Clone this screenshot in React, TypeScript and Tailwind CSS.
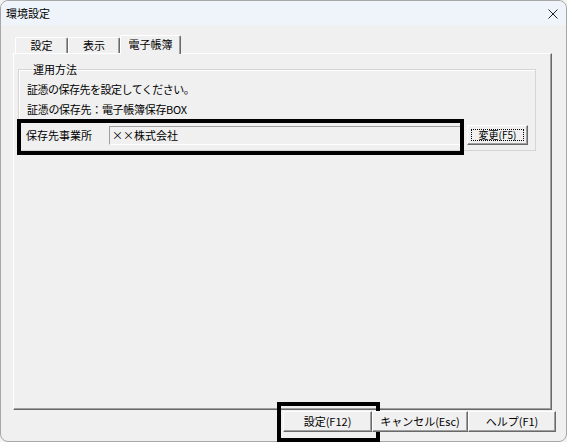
import React from "react";

const font = 'font-["Noto_Sans_CJK_JP","Noto_Sans_CJK_SC",sans-serif]';

const Tab = ({ label, active, w }: { label: string; active?: boolean; w: string }) => (
  <div
    className={
      "flex items-center justify-center border-l border-t border-white border-r border-r-[#696969] rounded-t-[2px] shadow-[inset_-1px_0_0_#a0a0a0] text-[11px] leading-none " +
      w +
      (active ? " h-[19px] bg-[#f0f0f0] relative z-10 -mb-px pb-[2px]" : " h-[16px] mt-auto")
    }
  >
    {label}
  </div>
);

const Btn = ({ label, w, h, focus, small }: { label: string; w: string; h: string; focus?: boolean; small?: boolean }) => (
  <div
    className={
      "relative flex items-center justify-center bg-[#f0f0f0] border border-t-white border-l-white border-r-[#696969] border-b-[#696969] shadow-[inset_-1px_-1px_0_#a0a0a0] leading-none " +
      w +
      " " +
      h +
      (small ? " text-[10px]" : " text-[11px]")
    }
  >
    {focus && <div className="absolute inset-[3px] border border-dotted border-black" />}
    <span className="relative">{label}</span>
  </div>
);

export default function App() {
  return (
    <div className={"w-[567px] h-[442px] bg-[#f3f3f3] text-black " + font}>
      <div className="h-full flex flex-col border border-[#a7a7a7] rounded-lg bg-[#f0f0f0]">
        {/* title bar */}
        <div className="h-[24px] shrink-0 bg-[#eef4fa] rounded-t-lg flex items-center justify-between pl-[5px] pr-[8px]">
          <span className="text-[11px] leading-none">環境設定</span>
          <svg width="10" height="10" viewBox="0 0 10 10" className="mt-[2px]">
            <path d="M0.5 0.5 L9.5 9.5 M9.5 0.5 L0.5 9.5" stroke="#222" strokeWidth="1" />
          </svg>
        </div>

        <div className="flex-1 flex flex-col pl-[12px] pr-[14px] pt-[10px]">
          {/* tabs */}
          <div className="flex h-[18px] pl-[2px]">
            <Tab label="設定" w="w-[53px]" />
            <Tab label="表示" w="w-[52px]" />
            <Tab label="電子帳簿" w="w-[61px]" active />
          </div>

          {/* tab pane */}
          <div className="h-[357px] border-l border-t border-white border-r border-b border-r-[#696969] border-b-[#696969] shadow-[inset_-1px_-1px_0_#a0a0a0] pt-[9px] pl-[4px] pr-[15px]">
            <fieldset className="border border-[#d5d5d5] shadow-[inset_1px_1px_0_#fff] h-[88px] pl-[8px] pr-[6px]">
              <legend className="ml-[5px] px-[1px] text-[11px] leading-[12px]">運用方法</legend>
              <div className="text-[11px] leading-none mt-[9px] tracking-[-0.5px]">証憑の保存先を設定してください。</div>
              <div className="text-[11px] leading-none mt-[9px] tracking-[-0.3px]">証憑の保存先：電子帳簿保存BOX</div>
              <div className="flex items-center mt-[10px] -ml-px">
                <div className="relative flex items-center">
                  <span className="w-[83px] text-[11px] leading-none">保存先事業所</span>
                  <div className="w-[352px] h-[19px] flex items-center pl-[2px] text-[11px] leading-none bg-[#f0f0f0] border border-t-[#a0a0a0] border-l-[#a0a0a0] border-r-white border-b-white">
                    ××株式会社
                  </div>
                  <div className="absolute -left-[9px] -right-[3px] -top-[7px] -bottom-[10px] border-[4px] border-black pointer-events-none" />
                </div>
                <div className="ml-[6px]">
                  <Btn label="変更(F5)" w="w-[61px]" h="h-[20px]" focus small />
                </div>
              </div>
            </fieldset>
          </div>

          {/* buttons */}
          <div className="flex justify-end mt-[1px] -mr-[4px]">
            <div className="relative">
              <Btn label="設定(F12)" w="w-[89px]" h="h-[21px]" />
              <div className="absolute -left-[6px] -right-[8px] -top-[9px] -bottom-[10px] border-[4px] border-black pointer-events-none" />
            </div>
            <Btn label="キャンセル(Esc)" w="w-[96px]" h="h-[21px]" />
            <Btn label="ヘルプ(F1)" w="w-[88px]" h="h-[21px]" />
          </div>
        </div>
      </div>
    </div>
  );
}
